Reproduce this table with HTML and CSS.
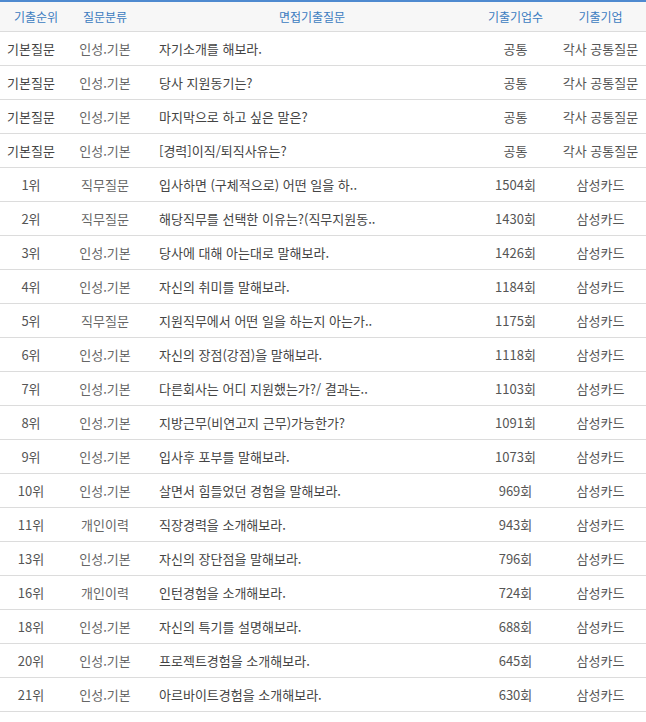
FILE: index.html
```html
<!DOCTYPE html>
<html lang="ko">
<head>
<meta charset="utf-8">
<link rel="stylesheet" href="styles.css">
</head>
<body>
<table class="qtable">
  <colgroup>
    <col class="c-rank"><col class="c-cat"><col class="c-q"><col class="c-cnt"><col class="c-co">
  </colgroup>
  <thead>
    <tr><th class="h-rank">기출순위</th><th>질문분류</th><th>면접기출질문</th><th>기출기업수</th><th>기출기업</th></tr>
  </thead>
  <tbody>
    <tr><td class="rank basic">기본질문</td><td class="cat">인성.기본</td><td class="q">자기소개를 해보라.</td><td class="cnt">공통</td><td class="co">각사 공통질문</td></tr>
    <tr><td class="rank basic">기본질문</td><td class="cat">인성.기본</td><td class="q">당사 지원동기는?</td><td class="cnt">공통</td><td class="co">각사 공통질문</td></tr>
    <tr><td class="rank basic">기본질문</td><td class="cat">인성.기본</td><td class="q">마지막으로 하고 싶은 말은?</td><td class="cnt">공통</td><td class="co">각사 공통질문</td></tr>
    <tr><td class="rank basic">기본질문</td><td class="cat">인성.기본</td><td class="q">[경력]이직/퇴직사유는?</td><td class="cnt">공통</td><td class="co">각사 공통질문</td></tr>
    <tr><td class="rank">1위</td><td class="cat">직무질문</td><td class="q">입사하면 (구체적으로) 어떤 일을 하..</td><td class="cnt">1504회</td><td class="co">삼성카드</td></tr>
    <tr><td class="rank">2위</td><td class="cat">직무질문</td><td class="q">해당직무를 선택한 이유는?(직무지원동..</td><td class="cnt">1430회</td><td class="co">삼성카드</td></tr>
    <tr><td class="rank">3위</td><td class="cat">인성.기본</td><td class="q">당사에 대해 아는대로 말해보라.</td><td class="cnt">1426회</td><td class="co">삼성카드</td></tr>
    <tr><td class="rank">4위</td><td class="cat">인성.기본</td><td class="q">자신의 취미를 말해보라.</td><td class="cnt">1184회</td><td class="co">삼성카드</td></tr>
    <tr><td class="rank">5위</td><td class="cat">직무질문</td><td class="q">지원직무에서 어떤 일을 하는지 아는가..</td><td class="cnt">1175회</td><td class="co">삼성카드</td></tr>
    <tr><td class="rank">6위</td><td class="cat">인성.기본</td><td class="q">자신의 장점(강점)을 말해보라.</td><td class="cnt">1118회</td><td class="co">삼성카드</td></tr>
    <tr><td class="rank">7위</td><td class="cat">인성.기본</td><td class="q">다른회사는 어디 지원했는가?/ 결과는..</td><td class="cnt">1103회</td><td class="co">삼성카드</td></tr>
    <tr><td class="rank">8위</td><td class="cat">인성.기본</td><td class="q">지방근무(비연고지 근무)가능한가?</td><td class="cnt">1091회</td><td class="co">삼성카드</td></tr>
    <tr><td class="rank">9위</td><td class="cat">인성.기본</td><td class="q">입사후 포부를 말해보라.</td><td class="cnt">1073회</td><td class="co">삼성카드</td></tr>
    <tr><td class="rank">10위</td><td class="cat">인성.기본</td><td class="q">살면서 힘들었던 경험을 말해보라.</td><td class="cnt">969회</td><td class="co">삼성카드</td></tr>
    <tr><td class="rank">11위</td><td class="cat">개인이력</td><td class="q">직장경력을 소개해보라.</td><td class="cnt">943회</td><td class="co">삼성카드</td></tr>
    <tr><td class="rank">13위</td><td class="cat">인성.기본</td><td class="q">자신의 장단점을 말해보라.</td><td class="cnt">796회</td><td class="co">삼성카드</td></tr>
    <tr><td class="rank">16위</td><td class="cat">개인이력</td><td class="q">인턴경험을 소개해보라.</td><td class="cnt">724회</td><td class="co">삼성카드</td></tr>
    <tr><td class="rank">18위</td><td class="cat">인성.기본</td><td class="q">자신의 특기를 설명해보라.</td><td class="cnt">688회</td><td class="co">삼성카드</td></tr>
    <tr><td class="rank">20위</td><td class="cat">인성.기본</td><td class="q">프로젝트경험을 소개해보라.</td><td class="cnt">645회</td><td class="co">삼성카드</td></tr>
    <tr><td class="rank">21위</td><td class="cat">인성.기본</td><td class="q">아르바이트경험을 소개해보라.</td><td class="cnt">630회</td><td class="co">삼성카드</td></tr>
  </tbody>
</table>
</body>
</html>
```

FILE: styles.css
```css
html, body {
  margin: 0;
  padding: 0;
  background: #fff;
}
body {
  font-family: "Noto Sans CJK KR", "Noto Sans", sans-serif;
  font-size: 13px;
  color: #555;
}
.qtable {
  width: 646px;
  border-collapse: collapse;
  table-layout: fixed;
  border-top: 2px solid #4f8ad0;
}
.c-rank { width: 62px; }
.c-cat { width: 86px; }
.c-q { width: 328px; }
.c-cnt { width: 79px; }
.c-co { width: 91px; }
.qtable th {
  height: 29px;
  padding: 0;
  background: #f7f7f7;
  color: #3b7bc0;
  font-size: 12px;
  font-weight: normal;
  text-align: center;
  border-bottom: 1px solid #dcdcdc;
  white-space: nowrap;
}
.qtable th.h-rank {
  padding-left: 10px;
}
.qtable td {
  height: 33px;
  padding: 0;
  text-align: center;
  border-bottom: 1px solid #dcdcdc;
  white-space: nowrap;
  overflow: hidden;
}
.qtable td.basic { color: #444; }
.qtable td.cat { color: #666; }
.qtable td.q {
  text-align: left;
  padding-left: 11px;
  color: #444;
}
.qtable td.cnt { color: #555; }
.qtable td.co { color: #555; }
```
